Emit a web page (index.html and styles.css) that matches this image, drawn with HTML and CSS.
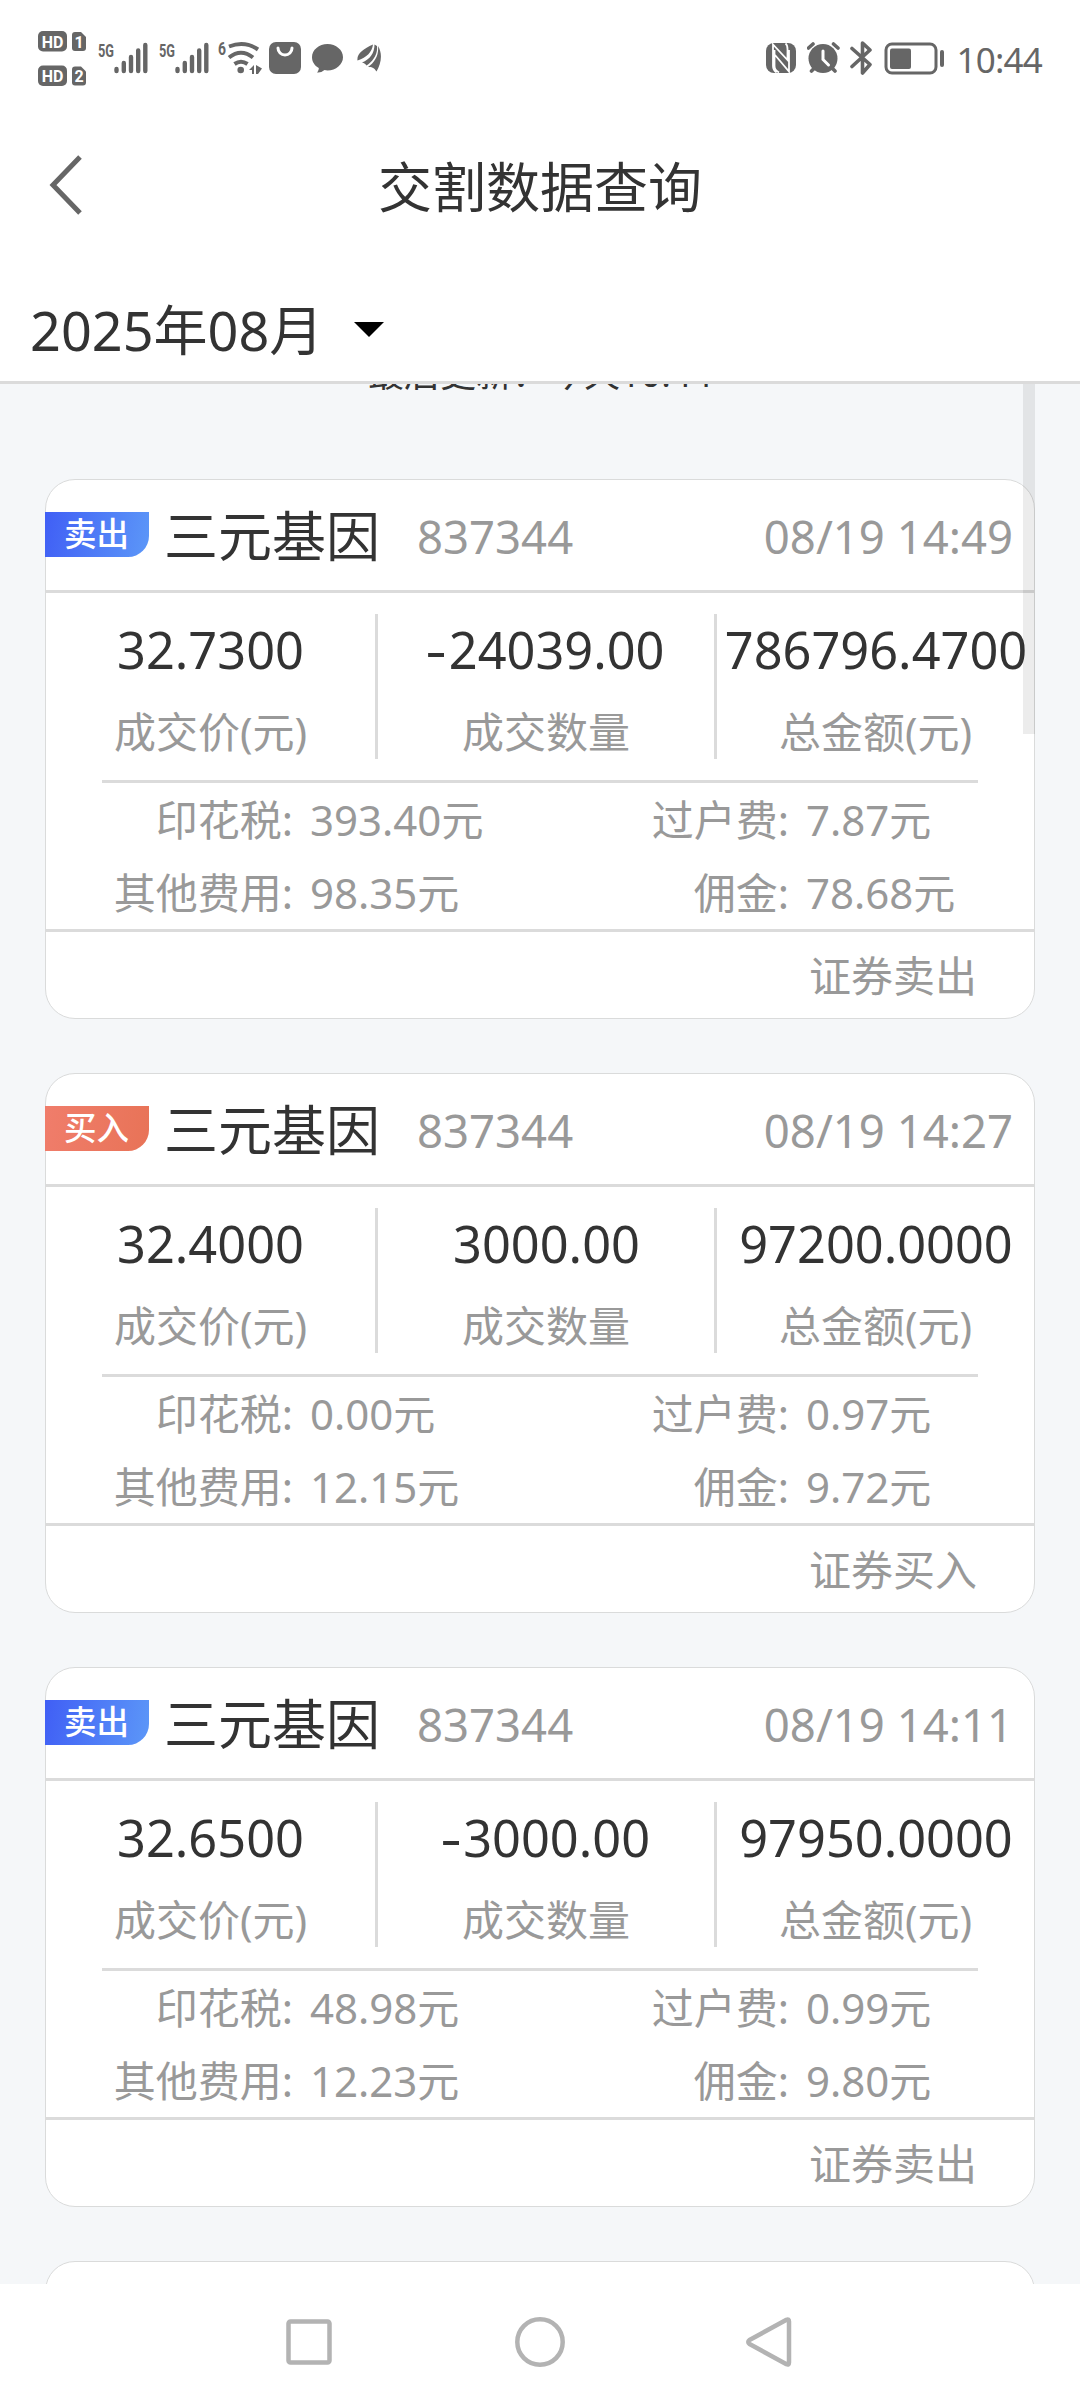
FILE: index.html
```html
<!DOCTYPE html>
<html lang="zh-CN">
<head>
    <meta charset="UTF-8">
    <meta name="viewport" content="width=device-width, initial-scale=1.0">
    <title>交割数据查询</title>
    <link rel="stylesheet" href="styles.css">
</head>
<body>
    <!-- Status bar -->
    <div class="status">
        <div class="status-left">
            <svg width="49" height="64" viewBox="38 26 49 64">
                <rect x="38" y="31" width="29" height="20.5" rx="5"/>
                <text class="hd" x="52.5" y="47.5">HD</text>
                <path d="M75 32h6l5 5v11q0 3-3 3h-8q-3 0-3-3v-13q0-3 3-3z"/>
                <text class="hd" x="79" y="47.5">1</text>
                <rect x="38" y="65.5" width="29" height="20.5" rx="5"/>
                <text class="hd" x="52.5" y="82">HD</text>
                <path d="M75 66.500h6l5 5v11q0 3-3 3h-8q-3 0-3-3v-13q0-3 3-3z"/>
                <text class="hd" x="79" y="82">2</text>
            </svg>
            <svg class="signal" width="50" height="64" viewBox="98 26 50 64">
                <text class="net" x="98" y="56.500" textLength="16" lengthAdjust="spacingAndGlyphs">5G</text>
                <path class="bars" d="M116.500 69v2M123.800 63v8M131 57v14M138.200 50.500v20.500M145.300 45v26"/>
            </svg>
            <svg class="signal" width="50" height="64" viewBox="98 26 50 64">
                <text class="net" x="98" y="56.500" textLength="16" lengthAdjust="spacingAndGlyphs">5G</text>
                <path class="bars" d="M116.500 69v2M123.800 63v8M131 57v14M138.200 50.500v20.500M145.300 45v26"/>
            </svg>
            <svg class="wifi" width="44" height="64" viewBox="218 26 44 64">
                <text class="net" x="218" y="54.500" textLength="8" lengthAdjust="spacingAndGlyphs">6</text>
                <path class="arc" d="M229 46.500Q245 40.500 258 49.500M229 57.500Q241 48 253 57.500M234.500 64Q241 59.500 247.500 64"/>
                <circle cx="240.700" cy="70" r="3.300"/>
                <path d="M249 70l5-5v9h-2v-4zM256 65l6 3.500-4 5.500h-2z"/>
            </svg>
            <svg class="bag" width="32" height="64" viewBox="269 26 32 64">
                <rect x="269" y="42" width="32" height="32" rx="7"/>
                <path class="cut" d="M278 48a7 7 0 0 0 14 0"/>
            </svg>
            <svg class="chat" width="31" height="64" viewBox="312 26 31 64">
                <path d="M327.500 44c8.500 0 15.500 6 15.500 13.200S336 70.400 327.500 70.400q-1.500 0-3-.3c-2.500 2-5 2.800-7.500 2.400 1.300-1.400 1.800-3 1.800-4.500C314.500 65.500 312 61.500 312 57.200 312 50 319 44 327.500 44z"/>
            </svg>
            <svg class="wing" width="24" height="64" viewBox="357 26 24 64">
                <path d="M357.500 60.500C356.500 54 363 49 373 44.500 372 52 367 57.500 357.500 60.500zM362 62.500C370 59.500 374.500 53 374.500 44.500L377 46C378 55 372 62 366.500 65.500 365.500 64 364.500 63 362 62.500zM368 67C375 62 379 55 378 46 383 54 381 64 376.500 71.500 374 67.500 371.500 67 368 67z"/>
            </svg>
        </div>
        <div class="status-right">
            <svg width="30" height="64" viewBox="767 26 30 64">
                <rect x="767" y="43" width="30" height="30" rx="8"/>
                <path class="nfc" d="M777.500 72.500Q774 70 774 66V44.500L788.500 60V49Q788.500 45 786.500 43.500M775.500 50V66Q775.500 70 780 72.500M776 55L790 71.500V50"/>
            </svg>
            <svg class="alarm" width="33" height="64" viewBox="808 26 33 64">
                <circle cx="824" cy="58.500" r="14.500"/>
                <path class="line" d="M809.500 48l4.500-4M839 48l-4.500-4M812.500 71l3-3M836 71l-3-3"/>
                <path class="cut" d="M824 51v8.500l5.500 5.500"/>
            </svg>
            <svg class="bluetooth" width="23" height="64" viewBox="851 26 23 64">
                <path class="line" d="M853 48.500l18 16-7.500 8.500V43l7.500 7-18 16.500"/>
            </svg>
            <svg class="battery" width="61" height="64" viewBox="885 26 61 64">
                <rect class="case" x="887" y="44" width="50" height="29" rx="6"/>
                <rect x="891" y="48.500" width="21" height="20.500" rx="2"/>
                <rect x="941" y="50" width="4" height="17" rx="2"/>
            </svg>
            <span class="clock">10:44</span>
        </div>
    </div>

    <!-- Title -->
    <div class="header">
        <svg class="back" width="40" height="64" viewBox="0 0 40 64">
            <path d="M35 4L8 32l27 28"/>
        </svg>
        <h1>交割数据查询</h1>
    </div>

    <div class="filter">
        <span>2025年08月</span>
        <i class="caret"></i>
    </div>

    <!-- Record list -->
    <div class="list">
        <div class="scrollbar"></div>
        <p class="refresh">最后更新：今天10:44</p>

        <div class="card">
            <div class="card-head">
                <span class="tag sell">卖出</span>
                <span class="name">三元基因</span>
                <span class="code">837344</span>
                <span class="time">08/19 14:49</span>
            </div>
            <div class="stats">
                <div class="stat"><b>32.7300</b><span>成交价(元)</span></div>
                <div class="stat"><b><i class="minus">-</i>24039.00</b><span>成交数量</span></div>
                <div class="stat"><b>786796.4700</b><span>总金额(元)</span></div>
            </div>
            <div class="fees">
                <span class="label">印花税:</span><span>393.40元</span>
                <span class="label">过户费:</span><span>7.87元</span>
                <span class="label">其他费用:</span><span>98.35元</span>
                <span class="label">佣金:</span><span>78.68元</span>
            </div>
            <div class="card-foot">证券卖出</div>
        </div>

        <div class="card">
            <div class="card-head">
                <span class="tag buy">买入</span>
                <span class="name">三元基因</span>
                <span class="code">837344</span>
                <span class="time">08/19 14:27</span>
            </div>
            <div class="stats">
                <div class="stat"><b>32.4000</b><span>成交价(元)</span></div>
                <div class="stat"><b>3000.00</b><span>成交数量</span></div>
                <div class="stat"><b>97200.0000</b><span>总金额(元)</span></div>
            </div>
            <div class="fees">
                <span class="label">印花税:</span><span>0.00元</span>
                <span class="label">过户费:</span><span>0.97元</span>
                <span class="label">其他费用:</span><span>12.15元</span>
                <span class="label">佣金:</span><span>9.72元</span>
            </div>
            <div class="card-foot">证券买入</div>
        </div>

        <div class="card">
            <div class="card-head">
                <span class="tag sell">卖出</span>
                <span class="name">三元基因</span>
                <span class="code">837344</span>
                <span class="time">08/19 14:11</span>
            </div>
            <div class="stats">
                <div class="stat"><b>32.6500</b><span>成交价(元)</span></div>
                <div class="stat"><b><i class="minus">-</i>3000.00</b><span>成交数量</span></div>
                <div class="stat"><b>97950.0000</b><span>总金额(元)</span></div>
            </div>
            <div class="fees">
                <span class="label">印花税:</span><span>48.98元</span>
                <span class="label">过户费:</span><span>0.99元</span>
                <span class="label">其他费用:</span><span>12.23元</span>
                <span class="label">佣金:</span><span>9.80元</span>
            </div>
            <div class="card-foot">证券卖出</div>
        </div>

        <div class="card"></div>
    </div>

    <!-- System navigation -->
    <div class="nav">
        <svg width="52" height="52" viewBox="0 0 52 52"><rect x="5.500" y="5.500" width="41" height="41" rx="2"/></svg>
        <svg width="52" height="52" viewBox="0 0 52 52"><circle cx="26" cy="26" r="22.700"/></svg>
        <svg width="52" height="52" viewBox="3 0 52 52"><path d="M44.500 3.800q2.500-1 2.500 1.700v41q0 2.700-2.500 1.700L7.500 28q-2.500-2 0-4z"/></svg>
    </div>
</body>
</html>
```
FILE: styles.css
```css
* {
    box-sizing: border-box;
}
body {
    margin: 0;
    width: 1080px;
    height: 2400px;
    display: flex;
    flex-direction: column;
    overflow: hidden;
    background: #fff;
    color: #333;
    font-family: "Noto Sans", "Noto Sans CJK SC", sans-serif;
}
svg {
    display: block;
    flex: none;
}

/* Status bar */
.status {
    display: flex;
    justify-content: space-between;
    height: 120px;
    padding: 26px 38px 0 38px;
    color: #666;
}
.status svg {
    fill: #666;
}
.status-left, .status-right {
    display: flex;
}
.status .hd {
    fill: #fff;
    font: bold 16px Roboto, sans-serif;
    text-anchor: middle;
}
.status .net {
    font: bold 19px Roboto, sans-serif;
}
.status .bars {
    fill: none;
    stroke: #666;
    stroke-width: 4.4;
    stroke-linecap: round;
}
.status .arc {
    fill: none;
    stroke: #666;
    stroke-width: 4;
}
.status .line {
    fill: none;
    stroke: #666;
    stroke-width: 3.6;
    stroke-linecap: round;
    stroke-linejoin: round;
}
.status .cut {
    fill: none;
    stroke: #fff;
    stroke-width: 3;
    stroke-linecap: round;
}
.status .nfc {
    fill: none;
    stroke: #fff;
    stroke-width: 1.8;
}
.status .case {
    fill: none;
    stroke: #666;
    stroke-width: 3;
}
.signal { margin-left: 11px; }
.wifi { margin-left: 9px; }
.bag { margin-left: 7px; }
.chat { margin-left: 11px; }
.wing { margin-left: 14px; }
.alarm { margin-left: 11px; }
.bluetooth { margin-left: 10px; }
.battery { margin-left: 11px; }
.clock {
    margin-left: 12px;
    font-size: 35px;
    font-weight: 400;
    line-height: 67px;
    letter-spacing: -0.8px;
}

/* Title */
.header {
    display: grid;
    grid-template-columns: 120px 1fr 120px;
    align-items: center;
    height: 135px;
}
.back {
    margin: -5px 0 0 45px;
    fill: none;
    stroke: #666;
    stroke-width: 5;
}
h1 {
    margin: -2px 0 0;
    font-size: 54px;
    font-weight: 400;
    line-height: 80px;
    text-align: center;
}

/* Month filter */
.filter {
    display: flex;
    align-items: center;
    height: 129px;
    padding: 23px 0 0 30px;
    border-bottom: 3px solid #dbdbdb;
    font-size: 54px;
    line-height: 80px;
}
.caret {
    margin: 0 0 0 31px;
    border: 15px solid transparent;
    border-top-color: #000;
    border-bottom: 0;
}

/* Record list */
.list {
    position: relative;
    height: 1900px;
    overflow: hidden;
    background: #f5f7f9;
}
.scrollbar {
    position: absolute;
    z-index: 1;
    top: 0;
    right: 45px;
    width: 12px;
    height: 350px;
    background: rgba(0, 0, 0, 0.075);
}
.refresh {
    margin: -40px 0 75px;
    font-size: 36px;
    line-height: 60px;
    text-align: center;
}
.card {
    width: 990px;
    height: 540px;
    margin: 0 45px 54px;
    background: #fff;
    border: 1px solid #dadbdb;
    border-radius: 30px;
}
.card-head {
    display: flex;
    align-items: center;
    height: 113px;
    padding-right: 21px;
    border-bottom: 3px solid #dbdbdb;
    color: #999;
    font-size: 45.500px;
}
.tag {
    width: 104px;
    height: 45px;
    margin: -2px 0 0 -1px;
    padding-right: 1px;
    border-radius: 0 0 21px 0;
    color: #fff;
    font-size: 32.500px;
    font-weight: 500;
    line-height: 44px;
    text-align: center;
}
.sell {
    background: linear-gradient(100deg, #405ff5, #5c97f8);
}
.buy {
    background: linear-gradient(100deg, #f07d6b, #e87357);
}
.name {
    margin: -3px 0 0 15px;
    color: #333;
    font-size: 54px;
}
.code {
    margin: 2px 0 0 37px;
}
.time {
    margin: 2px 0 0 auto;
}

.stats {
    display: flex;
    padding-top: 21px;
    height: 187px;
}
.stat {
    display: flex;
    flex-direction: column;
    align-items: center;
    width: 332px;
    height: 145px;
    border-right: 3px solid #dbdbdb;
    color: #999;
    font-size: 42px;
    line-height: 60px;
}
.stat:nth-child(2) {
    width: 339px;
}
.stat:last-child {
    width: 317px;
    border-right: 0;
}
.stat b {
    margin: 6px 0 22px;
    color: #333;
    font-size: 50.500px;
    font-weight: 400;
}
.stat + .stat b {
    padding-left: 1px;
}
.minus {
    display: inline-block;
    font-style: normal;
    transform: scaleX(1.300);
    margin-right: 4px;
}

.fees {
    display: grid;
    grid-template-columns: 191px 261px 201px 1fr;
    grid-auto-rows: 73px;
    column-gap: 17px;
    height: 149px;
    margin: 0 56px;
    border-top: 3px solid #dbdbdb;
    color: #999;
    font-size: 42px;
    line-height: 74px;
    white-space: nowrap;
}
.label {
    text-align: right;
}
.card-foot {
    height: 90px;
    padding-right: 57px;
    border-top: 3px solid #dbdbdb;
    color: #999;
    font-size: 42px;
    line-height: 88px;
    text-align: right;
}

/* System navigation */
.nav {
    display: flex;
    justify-content: center;
    gap: 179px;
    flex: 1;
    padding-top: 32px;
}
.nav svg {
    fill: none;
    stroke: #b3b3b3;
    stroke-width: 4.5;
    stroke-linejoin: round;
}
.nav svg:last-child {
    overflow: visible;
}
```
